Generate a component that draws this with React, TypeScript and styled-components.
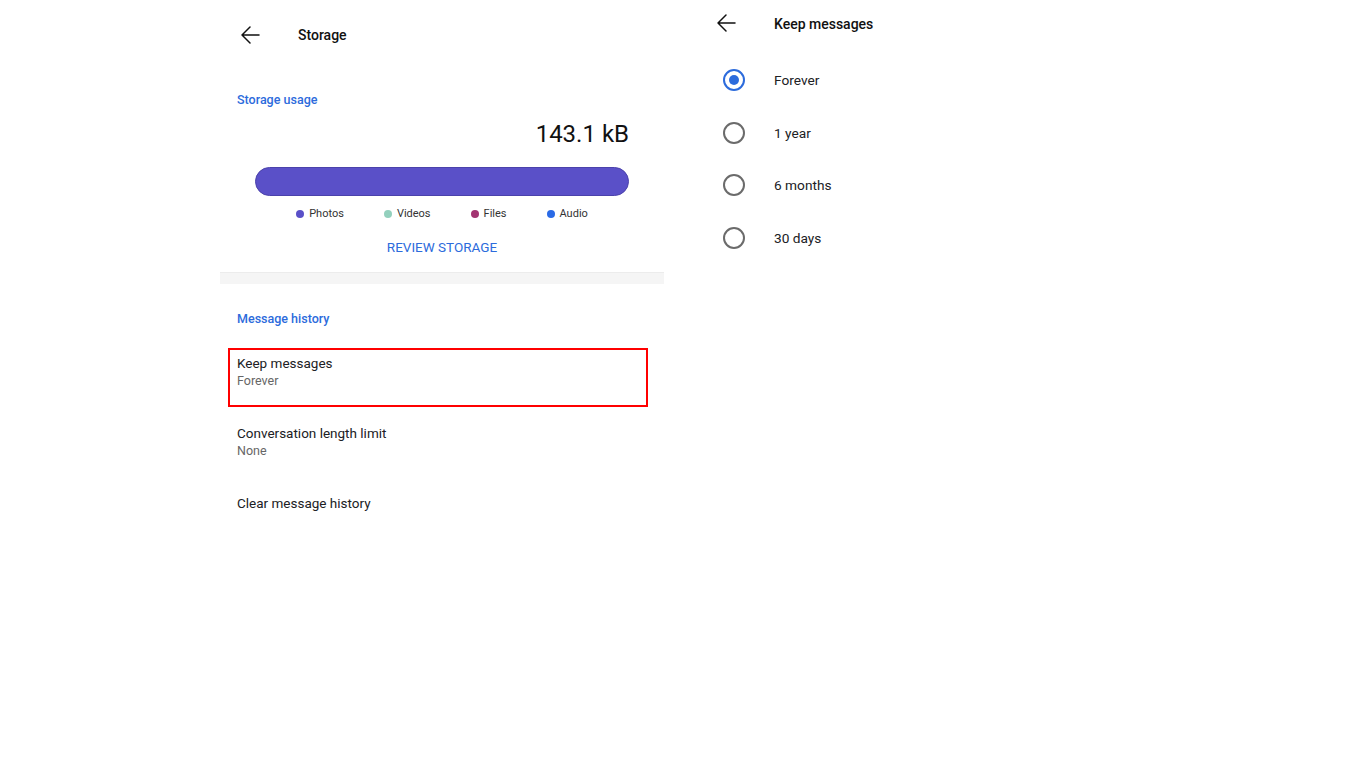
import React, {FC} from "react";
import styled, {createGlobalStyle} from "styled-components";

const GlobalStyle = createGlobalStyle`
  html, body {
    margin: 0;
    padding: 0;
    background: #ffffff;
    font-family: Roboto, "Noto Sans", "Liberation Sans", sans-serif;
    color: #202124;
  }
`;

const Page = styled.div`
  display: flex;
  align-items: flex-start;
  width: 1366px;
  height: 768px;
  overflow: hidden;
`;

const StoragePanel = styled.div`
  margin-left: 220px;
  width: 444px;
  display: flex;
  flex-direction: column;
`;

const KeepPanel = styled.div`
  margin-left: 36px;
  width: 400px;
  display: flex;
  flex-direction: column;
`;

const Header = styled.div<{ $height: number; $pad: number; $gap: number }>`
  display: flex;
  align-items: center;
  height: ${p => p.$height}px;
  padding-left: ${p => p.$pad}px;
  gap: ${p => p.$gap}px;
`;

const HeaderTitle = styled.div<{ $shift?: number }>`
  font-size: 14px;
  font-weight: 500;
  color: #111;
  padding-top: ${p => p.$shift ?? 0}px;
`;

const BackIcon = styled.svg`
  width: 20px;
  height: 20px;
  flex: none;
`;

const SectionLabel = styled.div<{ $top: number }>`
  margin-top: ${p => p.$top}px;
  padding-left: 17px;
  font-size: 12.5px;
  line-height: 20px;
  font-weight: 500;
  color: #2c6bdc;
`;

const UsageValue = styled.div`
  margin-top: 10px;
  padding-right: 35px;
  text-align: right;
  font-size: 24px;
  line-height: 28px;
  color: #111;
`;

const UsageBar = styled.div`
  margin: 19px 35px 0 35px;
  height: 29px;
  box-sizing: border-box;
  border-radius: 15px;
  background: #5a50c8;
  border: 1px solid #4b42ab;
`;

const Legend = styled.div`
  margin-top: 11px;
  display: flex;
  justify-content: center;
  gap: 40px;
  margin-left: 35px;
  margin-right: 35px;
`;

const LegendItem = styled.div`
  display: flex;
  align-items: center;
  gap: 5px;
  font-size: 11px;
  line-height: 14px;
  color: #333;
`;

const Dot = styled.span<{ $color: string }>`
  width: 8px;
  height: 8px;
  border-radius: 50%;
  background: ${p => p.$color};
`;

const ReviewButton = styled.div`
  margin-top: 16px;
  text-align: center;
  font-size: 13.5px;
  line-height: 20px;
  color: #2c6bdc;
`;

const Divider = styled.div`
  margin-top: 15px;
  height: 12px;
  box-sizing: border-box;
  background: #f5f5f5;
  border-top: 1px solid #ececec;
`;

const SettingsList = styled.div`
  margin-top: 16px;
  display: flex;
  flex-direction: column;
`;

const SettingItem = styled.div`
  position: relative;
  height: 70px;
  box-sizing: border-box;
  padding: 8px 17px 0 17px;
`;

const Highlight = styled.div`
  position: absolute;
  top: 3px;
  left: 8px;
  right: 16px;
  height: 59px;
  box-sizing: border-box;
  border: 2px solid #ff0000;
`;

const ItemTitle = styled.div`
  font-size: 13.5px;
  line-height: 20px;
  color: #202124;
`;

const ItemSub = styled.div`
  font-size: 12.5px;
  line-height: 16px;
  color: #666;
`;

const OptionList = styled.div`
  margin-top: 8px;
  display: flex;
  flex-direction: column;
`;

const OptionRow = styled.div`
  display: flex;
  align-items: center;
  height: 52.6px;
  padding-left: 23px;
  gap: 29px;
`;

const Radio = styled.span<{ $checked: boolean }>`
  width: 22px;
  height: 22px;
  box-sizing: border-box;
  border-radius: 50%;
  border: 2px solid ${p => (p.$checked ? "#2c6bdc" : "#6b6b6b")};
  display: flex;
  align-items: center;
  justify-content: center;

  &::after {
    content: "";
    width: 10px;
    height: 10px;
    border-radius: 50%;
    background: ${p => (p.$checked ? "#2c6bdc" : "transparent")};
  }
`;

const OptionLabel = styled.span`
  font-size: 13.7px;
  color: #202124;
`;

const Back: FC = () => (
    <BackIcon viewBox="0 0 20 20">
        <path d="M19 10H2M10 2L2 10L10 18" fill="none" stroke="#111" strokeWidth="1.5" strokeLinecap="round" strokeLinejoin="round"/>
    </BackIcon>
);

const legend = [
    {label: "Photos", color: "#5a50c8"},
    {label: "Videos", color: "#93d0bd"},
    {label: "Files", color: "#a33471"},
    {label: "Audio", color: "#2a6ae6"},
];

const settings = [
    {title: "Keep messages", sub: "Forever", marked: true},
    {title: "Conversation length limit", sub: "None", marked: false},
    {title: "Clear message history", sub: "", marked: false},
];

const options = ["Forever", "1 year", "6 months", "30 days"];

const App: FC = () => {
    return (
        <Page>
            <GlobalStyle/>
            <StoragePanel>
                <Header $height={70} $pad={20} $gap={38}>
                    <Back/>
                    <HeaderTitle>Storage</HeaderTitle>
                </Header>
                <SectionLabel $top={20}>Storage usage</SectionLabel>
                <UsageValue>143.1 kB</UsageValue>
                <UsageBar/>
                <Legend>
                    {legend.map(l => (
                        <LegendItem key={l.label}>
                            <Dot $color={l.color}/>
                            {l.label}
                        </LegendItem>
                    ))}
                </Legend>
                <ReviewButton>REVIEW STORAGE</ReviewButton>
                <Divider/>
                <SectionLabel $top={25}>Message history</SectionLabel>
                <SettingsList>
                    {settings.map(s => (
                        <SettingItem key={s.title}>
                            {s.marked && <Highlight/>}
                            <ItemTitle>{s.title}</ItemTitle>
                            {s.sub && <ItemSub>{s.sub}</ItemSub>}
                        </SettingItem>
                    ))}
                </SettingsList>
            </StoragePanel>

            <KeepPanel>
                <Header $height={46} $pad={16} $gap={38}>
                    <Back/>
                    <HeaderTitle $shift={2}>Keep messages</HeaderTitle>
                </Header>
                <OptionList>
                    {options.map((o, i) => (
                        <OptionRow key={o}>
                            <Radio $checked={i === 0}/>
                            <OptionLabel>{o}</OptionLabel>
                        </OptionRow>
                    ))}
                </OptionList>
            </KeepPanel>
        </Page>
    )
}

export default App;
